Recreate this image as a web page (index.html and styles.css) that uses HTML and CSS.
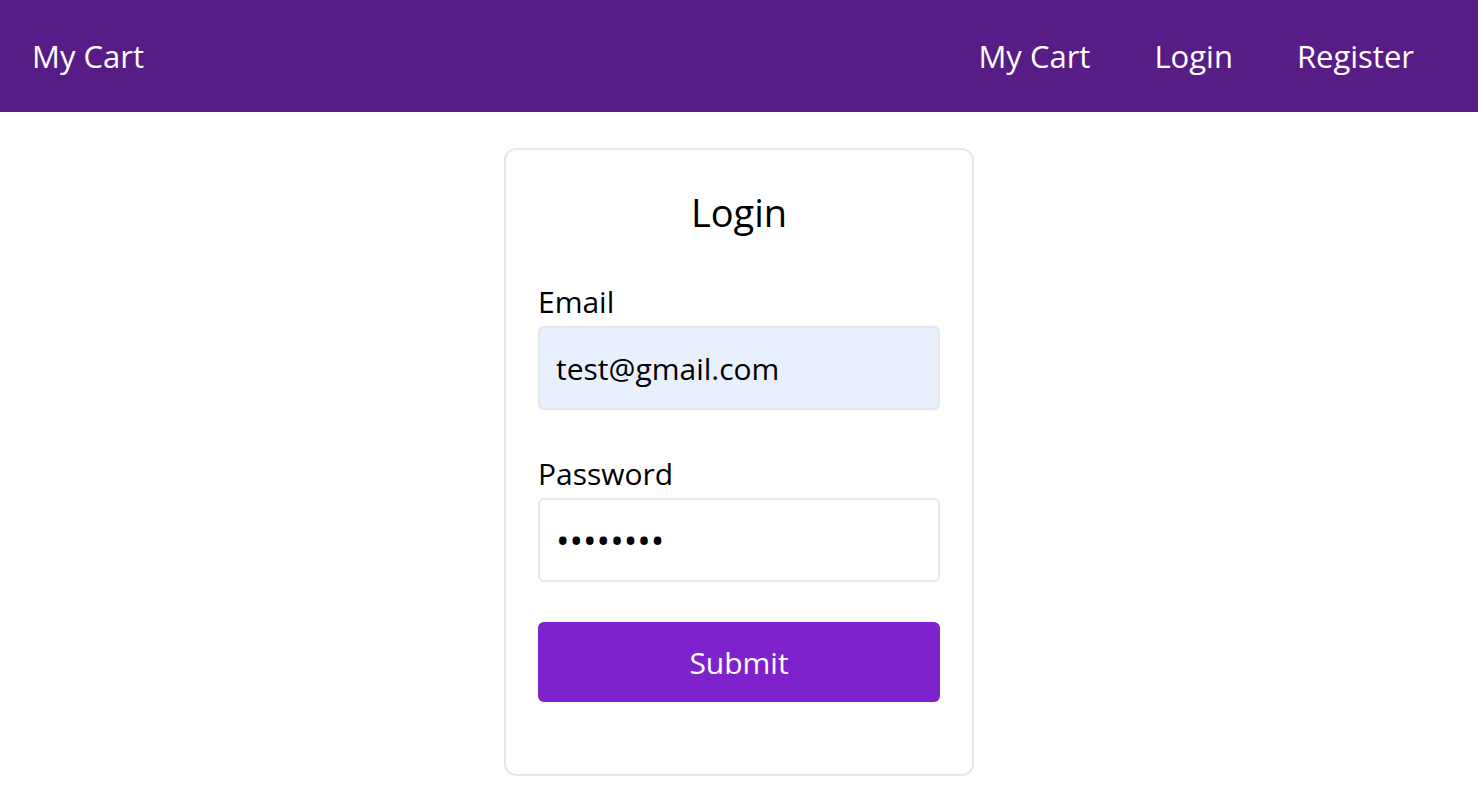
FILE: index.html
```html
<!DOCTYPE html>
<html lang="en">
<head>
<meta charset="utf-8">
<title>My Cart - Login</title>
<link rel="stylesheet" href="styles.css">
</head>
<body>
<header class="navbar">
  <a class="brand" href="#">My Cart</a>
  <nav class="nav-links">
    <a class="nav-link" href="#">My Cart</a>
    <a class="nav-link" href="#">Login</a>
    <a class="nav-link" href="#">Register</a>
  </nav>
</header>
<main class="page">
  <form class="card">
    <h1 class="card-title">Login</h1>
    <div class="field">
      <label class="label" for="email">Email</label>
      <input class="input input-filled" id="email" type="email" value="test@gmail.com">
    </div>
    <div class="field field-last">
      <label class="label" for="password">Password</label>
      <input class="input input-password" id="password" type="password" value="password">
    </div>
    <button class="submit" type="button">Submit</button>
  </form>
</main>
</body>
</html>
```

FILE: styles.css
```css
* { box-sizing: border-box; }
html, body { margin: 0; padding: 0; }
body {
  font-family: "Open Sans", "Noto Sans", sans-serif;
  color: #000;
  background: #fff;
}
.navbar {
  height: 112px;
  background: #581c87;
  display: flex;
  align-items: center;
  justify-content: space-between;
  padding: 0 32px;
}
.brand, .nav-link {
  color: #fff;
  text-decoration: none;
  font-size: 31px;
  line-height: 36px;
}
.nav-links { display: flex; }
.nav-link { padding: 0 32px; }
.nav-link:last-child { padding-right: 32px; }
.page {
  display: flex;
  justify-content: center;
  padding-top: 36px;
}
.card {
  width: 470px;
  border: 2px solid #e5e7eb;
  border-radius: 12px;
  padding: 32px 32px 72px;
  display: flex;
  flex-direction: column;
}
.card-title {
  margin: 10px 0 52px;
  font-weight: 400;
  font-size: 38px;
  line-height: 40px;
  text-align: center;
}
.field {
  display: flex;
  flex-direction: column;
  margin-bottom: 46px;
}
.field-last { margin-bottom: 40px; }
.label {
  font-size: 30px;
  line-height: 36px;
  padding-bottom: 6px;
}
.input {
  height: 84px;
  border: 2px solid #e5e7eb;
  border-radius: 6px;
  padding: 0 16px;
  font-family: inherit;
  font-size: 30px;
  color: #000;
  background: #fff;
  outline: none;
}
.input-filled { background: #e8f0fe; }
.input-password { font-size: 36px; }
.submit {
  height: 80px;
  border: none;
  border-radius: 6px;
  background: #7e22ce;
  color: #fff;
  font-family: inherit;
  font-size: 30px;
}
```
